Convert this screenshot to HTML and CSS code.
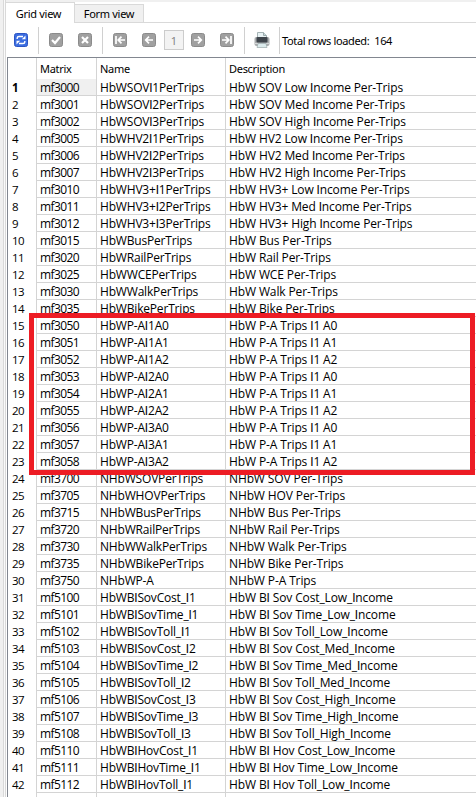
FILE: index.html
```html
<!DOCTYPE html>
<html lang="en">
<head>
<meta charset="utf-8">
<title>Grid view</title>
<link rel="stylesheet" href="styles.css">
</head>
<body>
<div class="window">
  <nav class="tabs">
    <div class="tab active"><span>Grid view</span></div>
    <div class="tab"><span>Form view</span></div>
    <div class="rest"></div>
  </nav>
  <div class="toolbar">
    <svg class="btn refresh" viewBox="0 0 14 14"><rect class="blue" x=".5" y=".5" width="13" height="13" rx="2"/><path class="stroke thin" d="M3.2 6V5Q3.2 3.5 5 3.5H9M10.8 8v1Q10.8 10.5 9 10.5H5"/><path class="fill" d="M7.8 6.2h3.7V2.5zM6.2 7.8H2.5v3.7z"/></svg>
    <i class="sep s1"></i>
    <svg class="btn check" viewBox="0 0 14 14"><rect class="gray" x=".5" y=".5" width="13" height="13" rx="2"/><path class="stroke thick" d="M3 7l3 3 5-6"/></svg>
    <svg class="btn cancel" viewBox="0 0 14 14"><rect class="gray" x=".5" y=".5" width="13" height="13" rx="2"/><path class="stroke thick" d="M4 4l6 6M10 4l-6 6"/></svg>
    <i class="sep s2"></i>
    <svg class="btn first" viewBox="0 0 14 14"><rect class="gray" x=".5" y=".5" width="13" height="13" rx="2"/><path class="stroke" d="M3 3v8M12 7H6M8.5 3.7L5.2 7l3.3 3.3"/></svg>
    <svg class="btn prev" viewBox="0 0 14 14"><rect class="gray" x=".5" y=".5" width="13" height="13" rx="2"/><path class="stroke" d="M11 7H4M7 3.7L3.7 7 7 10.3"/></svg>
    <span class="page">1</span>
    <svg class="btn next" viewBox="0 0 14 14"><rect class="gray" x=".5" y=".5" width="13" height="13" rx="2"/><path class="stroke" d="M3 7h7M7 3.7L10.3 7 7 10.3"/></svg>
    <svg class="btn last" viewBox="0 0 14 14"><rect class="gray" x=".5" y=".5" width="13" height="13" rx="2"/><path class="stroke" d="M11 3v8M2 7h6M5.5 3.7L8.8 7l-3.3 3.3"/></svg>
    <i class="sep s3"></i>
    <svg class="printer" viewBox="0 0 16 16"><path d="M3.5 6V.5h6l3 3V6z" fill="#e8f2f4" stroke="#a5b3b5"/><path d="M9.5.5v3h3" fill="#c8dadd" stroke="#9caaac"/><rect x=".5" y="5" width="15" height="9" rx="2" fill="#a9acae"/><rect x="2.5" y="5" width="11" height="5.5" rx="1" fill="#3f454c"/><path d="M1 11.5h14" stroke="#d5d8d9"/><path d="M4 11.5h8l1 4H3z" fill="#dcebed" stroke="#9caaac" stroke-width=".7"/></svg>
    <i class="sep s4"></i>
    <span class="total">Total rows loaded:&nbsp; 164</span>
  </div>
  <main class="grid">
    <div class="row head"><span class="num"></span><span class="cell">Matrix</span><span class="cell">Name</span><span class="cell">Description</span></div>
    <div id="rows"></div>
    <div class="row tail"><span class="num"></span><span class="cell"></span><span class="cell"></span><span class="cell"></span></div>
  </main>
</div>
<div class="highlight"></div>
<script src="rows.js"></script>
</body>
</html>
```
FILE: styles.css
```css
* { box-sizing: border-box; }
body { margin: 0; background: #f0f0f0; overflow: hidden; color: #000; }
.window { height: 797px; margin-left: 5px; padding-top: 2px; border-left: 1px solid #d9d9d9; background: linear-gradient(#f0f0f0 2px, #fff 2px); display: flex; flex-direction: column; font: 11px "Noto Sans", sans-serif; box-shadow: -1px 0 #fafafa, -2px 0 #d9d9d9; }
.tabs { display: flex; align-items: flex-end; height: 21px; flex: none; letter-spacing: -.3px; }
.tab { width: 69px; height: 19px; line-height: 18px; background: #f0f0f0; border: 1px solid #d9d9d9; border-left: 0; text-align: center; white-space: nowrap; }
.tab.active { width: 69px; height: 21px; line-height: 21px; background: #fff; border-bottom: 0; padding-right: 3px; }
.rest { flex: 1; border-bottom: 1px solid #d9d9d9; height: 21px; }
.toolbar { height: 34px; flex: none; display: flex; align-items: center; }
.btn { width: 14px; height: 14px; flex: none; }
.gray { fill: #a0a0a0; stroke: #8b8b8b; }
.blue { fill: #3b6de0; stroke: #2c55c4; }
.stroke { fill: none; stroke: #fff; stroke-width: 1.7; }
.thin { stroke-width: 1.4; }
.thick { stroke-width: 2.2; }
.fill { fill: #fff; }
.sep { width: 1px; height: 27px; background: #d0d0d0; flex: none; }
.refresh { margin-left: 8px; }
.s1 { margin-left: 10px; }
.check { margin-left: 10px; }
.cancel { margin-left: 15px; }
.s2 { margin-left: 10px; }
.first { margin-left: 10px; }
.prev { margin-left: 15px; }
.page { width: 20px; height: 20px; margin-left: 8px; border: 1px solid #ccc; background: #f3f3f3; color: #858585; text-align: center; line-height: 20px; flex: none; }
.next { margin-left: 7px; }
.last { margin-left: 15px; }
.s3 { margin-left: 10px; }
.printer { width: 16px; height: 16px; margin-left: 9px; flex: none; }
.s4 { margin-left: 9px; }
.total { margin-left: 2px; letter-spacing: -.36px; white-space: nowrap; }
.grid { flex: 1; min-height: 0; overflow: hidden; margin-left: 1px; border-left: 1px solid #828790; border-top: 1px solid #828790; font: 12px "Open Sans", sans-serif; }
.row { display: grid; grid-template-columns: 29px 60px 129px 1fr; height: 17px; line-height: 17px; white-space: nowrap; }
.num { padding-left: 4px; border-right: 1px solid #d4d4d4; font-size: 11.5px; letter-spacing: -.5px; line-height: 18px; }
.cell { height: 17px; padding-left: 3px; border-right: 1px solid #d4d4d4; border-bottom: 1px solid #d4d4d4; letter-spacing: -.12px; }
.cell:nth-child(2) { letter-spacing: -.6px; }
.cell:nth-child(3) { letter-spacing: -.18px; }
.cell:last-child { border-right: 0; }
.bar { font-family: Roboto, sans-serif; line-height: 1; }
.head { height: 21px; font: 11px/22px "Noto Sans", sans-serif; }
.head .cell { height: 21px; border-bottom: 0; letter-spacing: -.3px; }
.current .num { font-weight: bold; }
.current .cell:nth-child(2) { background: #f0f0f0; }
.highlight { position: absolute; left: 29px; top: 313px; width: 446px; height: 162px; border: 5px solid #ed1c24; }
```
FILE: rows.js
```js
const data = `mf3000|HbWSOVI1PerTrips|HbW SOV Low Income Per-Trips
mf3001|HbWSOVI2PerTrips|HbW SOV Med Income Per-Trips
mf3002|HbWSOVI3PerTrips|HbW SOV High Income Per-Trips
mf3005|HbWHV2I1PerTrips|HbW HV2 Low Income Per-Trips
mf3006|HbWHV2I2PerTrips|HbW HV2 Med Income Per-Trips
mf3007|HbWHV2I3PerTrips|HbW HV2 High Income Per-Trips
mf3010|HbWHV3+I1PerTrips|HbW HV3+ Low Income Per-Trips
mf3011|HbWHV3+I2PerTrips|HbW HV3+ Med Income Per-Trips
mf3012|HbWHV3+I3PerTrips|HbW HV3+ High Income Per-Trips
mf3015|HbWBusPerTrips|HbW Bus Per-Trips
mf3020|HbWRailPerTrips|HbW Rail Per-Trips
mf3025|HbWWCEPerTrips|HbW WCE Per-Trips
mf3030|HbWWalkPerTrips|HbW Walk Per-Trips
mf3035|HbWBikePerTrips|HbW Bike Per-Trips
mf3050|HbWP-AI1A0|HbW P-A Trips I1 A0
mf3051|HbWP-AI1A1|HbW P-A Trips I1 A1
mf3052|HbWP-AI1A2|HbW P-A Trips I1 A2
mf3053|HbWP-AI2A0|HbW P-A Trips I1 A0
mf3054|HbWP-AI2A1|HbW P-A Trips I1 A1
mf3055|HbWP-AI2A2|HbW P-A Trips I1 A2
mf3056|HbWP-AI3A0|HbW P-A Trips I1 A0
mf3057|HbWP-AI3A1|HbW P-A Trips I1 A1
mf3058|HbWP-AI3A2|HbW P-A Trips I1 A2
mf3700|NHbWSOVPerTrips|NHbW SOV Per-Trips
mf3705|NHbWHOVPerTrips|NHbW HOV Per-Trips
mf3715|NHbWBusPerTrips|NHbW Bus Per-Trips
mf3720|NHbWRailPerTrips|NHbW Rail Per-Trips
mf3730|NHbWWalkPerTrips|NHbW Walk Per-Trips
mf3735|NHbWBikePerTrips|NHbW Bike Per-Trips
mf3750|NHbWP-A|NHbW P-A Trips
mf5100|HbWBISovCost_I1|HbW BI Sov Cost_Low_Income
mf5101|HbWBISovTime_I1|HbW BI Sov Time_Low_Income
mf5102|HbWBISovToll_I1|HbW BI Sov Toll_Low_Income
mf5103|HbWBISovCost_I2|HbW BI Sov Cost_Med_Income
mf5104|HbWBISovTime_I2|HbW BI Sov Time_Med_Income
mf5105|HbWBISovToll_I2|HbW BI Sov Toll_Med_Income
mf5106|HbWBISovCost_I3|HbW BI Sov Cost_High_Income
mf5107|HbWBISovTime_I3|HbW BI Sov Time_High_Income
mf5108|HbWBISovToll_I3|HbW BI Sov Toll_High_Income
mf5110|HbWBIHovCost_I1|HbW BI Hov Cost_Low_Income
mf5111|HbWBIHovTime_I1|HbW BI Hov Time_Low_Income
mf5112|HbWBIHovToll_I1|HbW BI Hov Toll_Low_Income`;

// A capital I is set in a face that draws it without serifs.
const plainCapitals = text => text.replace(/I/g, '<span class="bar">I</span>');

const rows = document.getElementById("rows");
data.split("\n").forEach((line, i) => {
  const row = document.createElement("div");
  row.className = i === 0 ? "row current" : "row";
  [String(i + 1), ...line.split("|")].forEach((text, j) => {
    const cell = document.createElement("span");
    cell.className = j === 0 ? "num" : "cell";
    cell.innerHTML = plainCapitals(text);
    row.append(cell);
  });
  rows.append(row);
});
```
